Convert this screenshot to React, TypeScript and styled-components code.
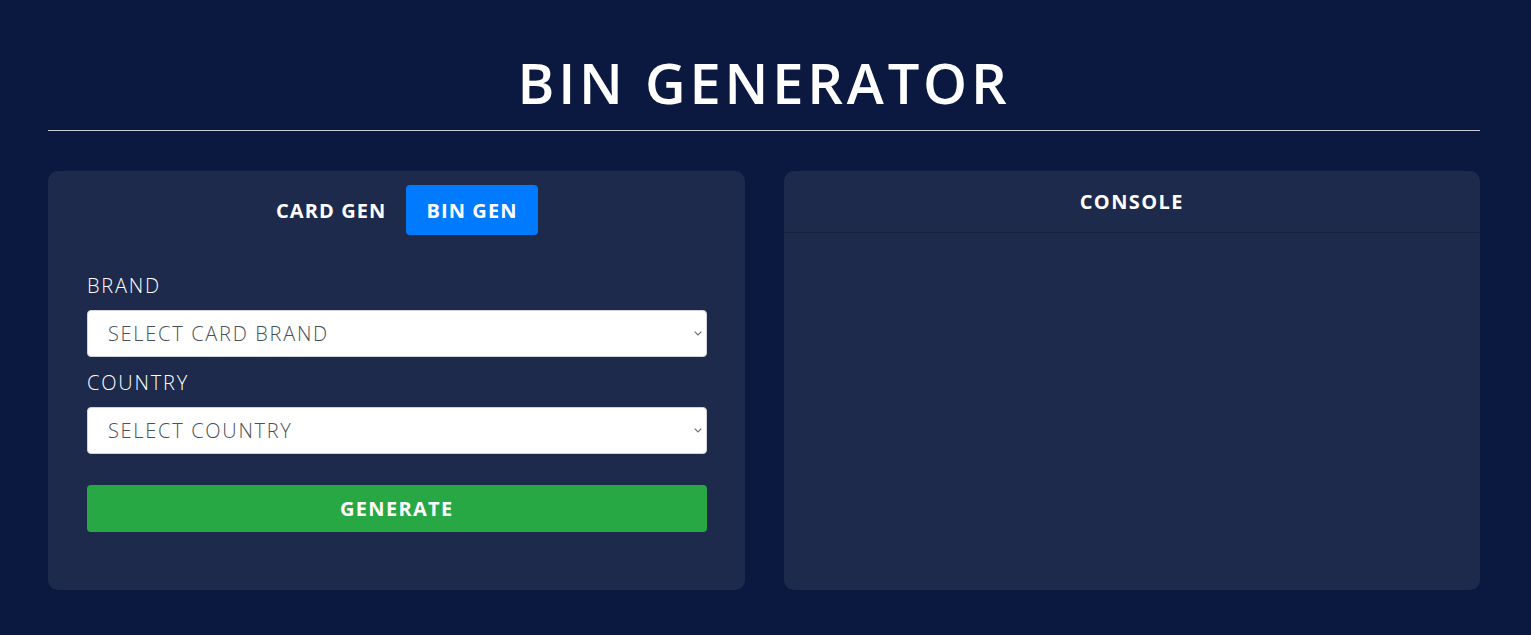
import React from 'react'
import styled, { createGlobalStyle } from 'styled-components'

const GlobalStyle = createGlobalStyle`
  html, body {
    margin: 0;
    padding: 0;
    background: #0b1940;
    font-family: "Open Sans", "Liberation Sans", sans-serif;
    color: #ffffff;
  }
  * { box-sizing: border-box; }
`

const Page = styled.div`
  padding: 0 51px 0 48px;
  min-height: 635px;
`

const Title = styled.h1`
  margin: 0;
  padding-top: 42px;
  text-align: center;
  font-size: 56px;
  font-weight: 600;
  line-height: 80px;
  letter-spacing: 3.8px;
`

const Rule = styled.hr`
  margin: 8px 0 40px 0;
  border: none;
  border-top: 1px solid #c9ccd4;
`

const Grid = styled.div`
  display: grid;
  grid-template-columns: 1fr 1fr;
  gap: 39px;
`

const Card = styled.section`
  background: #1d2a4b;
  border-radius: 10px;
  height: 419px;
  display: flex;
  flex-direction: column;
`

const FormBody = styled.div`
  padding: 14px 38px 0 39px;
`

const Tabs = styled.div`
  display: flex;
  justify-content: center;
  margin-bottom: 37px;
`

const Tab = styled.button<{ $active?: boolean }>`
  height: 50px;
  padding: 0 20px;
  border: none;
  border-radius: 4px;
  background: ${p => (p.$active ? '#007bff' : 'transparent')};
  color: #ffffff;
  font-family: inherit;
  font-size: 20px;
  font-weight: 700;
  letter-spacing: 1.1px;
  cursor: pointer;
`

const Label = styled.label`
  display: block;
  font-size: 20px;
  font-weight: 300;
  line-height: 28px;
  margin-bottom: 10px;
  letter-spacing: 1.8px;
`

const SelectWrap = styled.div`
  position: relative;
  margin-bottom: 12px;
`

const Select = styled.select`
  display: block;
  width: 100%;
  height: 47px;
  padding: 0 30px 0 20px;
  border: 1px solid #ced4da;
  border-radius: 4px;
  background: #ffffff;
  color: #495057;
  font-family: inherit;
  font-size: 20px;
  font-weight: 300;
  letter-spacing: 1.7px;
  appearance: none;
  -webkit-appearance: none;
  outline: none;
`

const Chevron = styled.svg`
  position: absolute;
  right: 5px;
  top: 21px;
  width: 8px;
  height: 5px;
  pointer-events: none;
`

const GenerateButton = styled.button`
  display: block;
  width: 100%;
  height: 47px;
  margin-top: 31px;
  border: none;
  border-radius: 4px;
  background: #28a745;
  color: #ffffff;
  font-family: inherit;
  font-size: 20px;
  font-weight: 700;
  letter-spacing: 1.3px;
  cursor: pointer;
`

const ConsoleHeader = styled.header`
  height: 62px;
  display: flex;
  align-items: center;
  justify-content: center;
  border-bottom: 1px solid #18223f;
  font-size: 20px;
  font-weight: 700;
  letter-spacing: 1.4px;
`

const ConsoleBody = styled.div`
  flex: 1;
`

interface IDropdownProps {
  id: string
  placeholder: string
  options: string[]
}

const Dropdown: React.FC<IDropdownProps> = ({ id, placeholder, options }) => (
  <SelectWrap>
    <Select id={id} defaultValue="">
      <option value="">{placeholder}</option>
      {options.map(o => (
        <option key={o} value={o}>{o}</option>
      ))}
    </Select>
    <Chevron viewBox="0 0 8 5" fill="none">
      <path d="M0.7 0.7 L4 4 L7.3 0.7" stroke="#6c6f75" strokeWidth="1.2" />
    </Chevron>
  </SelectWrap>
)

export default function App() {
  return (
    <Page>
      <GlobalStyle />
      <Title>BIN GENERATOR</Title>
      <Rule />
      <Grid>
        <Card>
          <FormBody>
            <Tabs>
              <Tab>CARD GEN</Tab>
              <Tab $active>BIN GEN</Tab>
            </Tabs>
            <Label htmlFor="brand">BRAND</Label>
            <Dropdown
              id="brand"
              placeholder="SELECT CARD BRAND"
              options={['VISA', 'MASTERCARD', 'AMEX', 'DISCOVER']}
            />
            <Label htmlFor="country">COUNTRY</Label>
            <Dropdown
              id="country"
              placeholder="SELECT COUNTRY"
              options={['UNITED STATES', 'UNITED KINGDOM', 'CANADA']}
            />
            <GenerateButton>GENERATE</GenerateButton>
          </FormBody>
        </Card>
        <Card>
          <ConsoleHeader>CONSOLE</ConsoleHeader>
          <ConsoleBody />
        </Card>
      </Grid>
    </Page>
  )
}
